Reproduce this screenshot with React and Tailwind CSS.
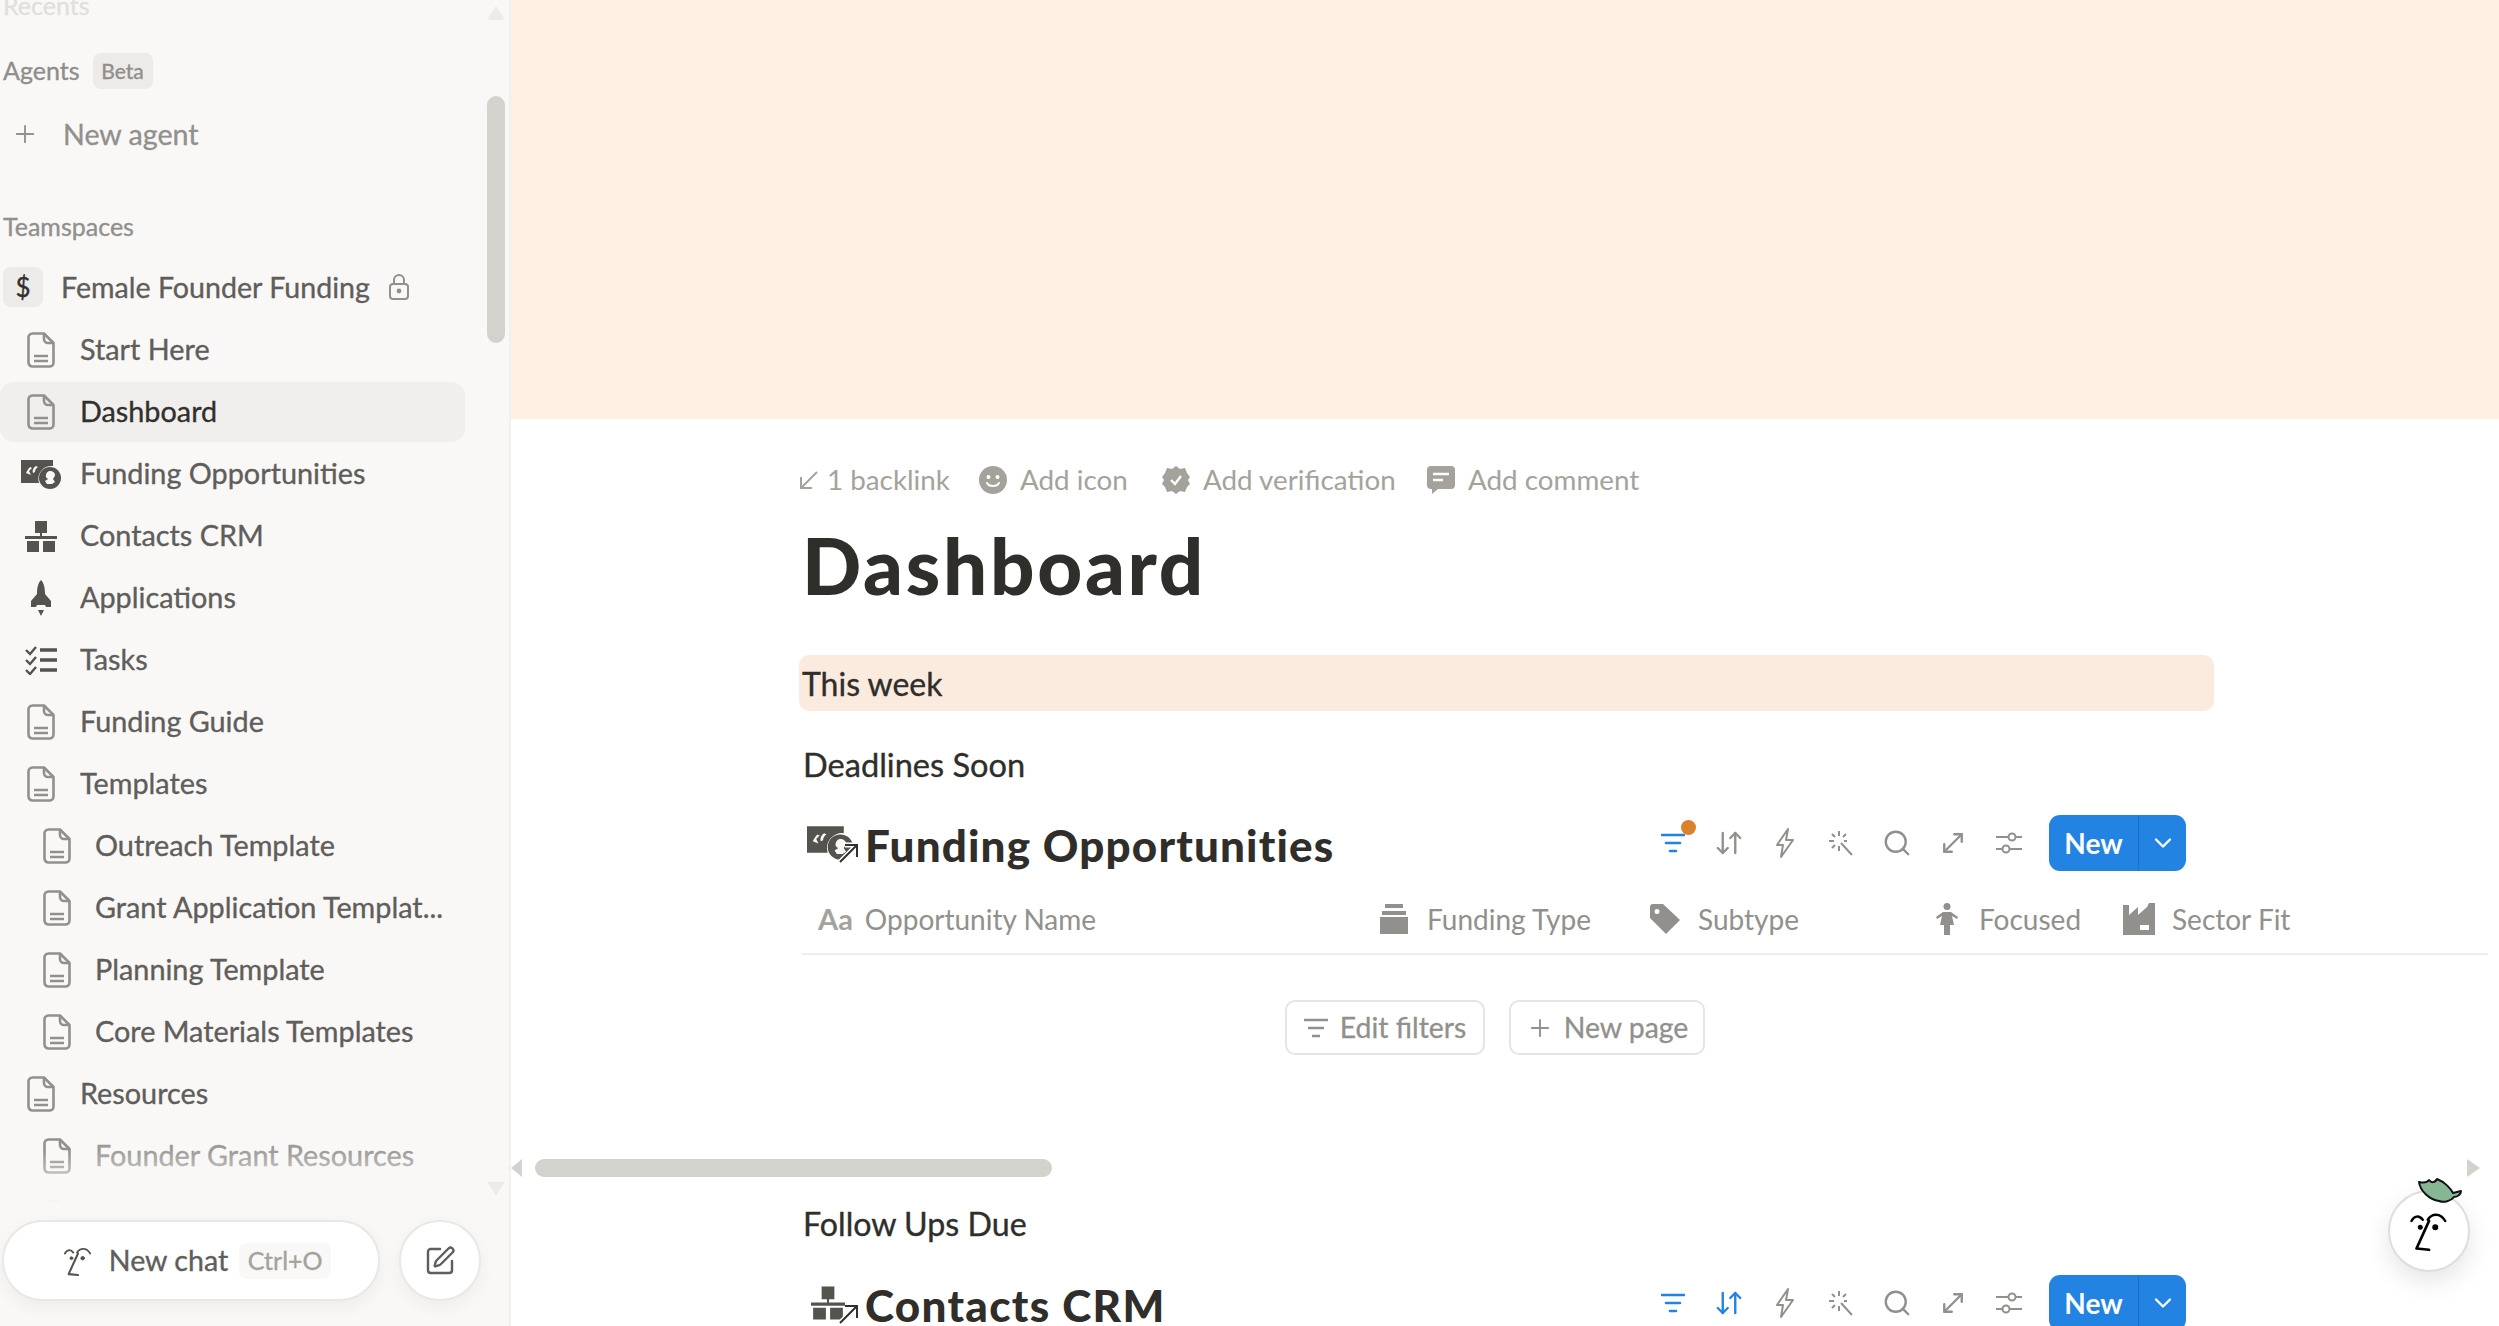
import React from 'react';
import { Plus, ChevronDown, ArrowDownUp, Search, MoveDiagonal, SquarePen } from 'lucide-react';

const DocIcon = () => (
  <svg viewBox="0 0 28 36" className="h-[36px] w-[28px]" fill="none" stroke="#91908c" strokeWidth="2.6" strokeLinejoin="round">
    <path d="M6 1.5h11l9.5 9.5v19.5a4 4 0 0 1-4 4H6a4 4 0 0 1-4.5-4V6A4 4 0 0 1 6 1.5z" />
    <path d="M17 1.5V7a4 4 0 0 0 4 4h5.5" />
    <path d="M7 24h14M7 29h14" />
  </svg>
);

const MoneyIcon = ({ className }) => (
  <svg viewBox="0 0 40 29" className={className} fill="#55534e">
    <path d="M0 0h32v4H0z" />
    <path d="M0 4h32v2a13 13 0 0 0-14 17H0z" />
    <path d="M9 7c-2 2-3 4-4 6l5 2-2-4 3-3z" fill="#f9f8f7" />
    <path d="M15 6c-2 1-4 4-3 7l2-1c0-2 1-4 3-5z" fill="#f9f8f7" />
    <circle cx="29" cy="18" r="11" />
    <path d="M29 11c3 0 5 2 5 4 0 2-2 3-2 4l2 3-3 2h-5l-2-3 3-2c-1-1-3-2-2-4 0-2 2-4 4-4z" fill="#f9f8f7" />
  </svg>
);

const SitemapIcon = ({ className }) => (
  <svg viewBox="0 0 32 31" className={className} fill="#55534e">
    <path d="M10 0h12v12H10zM15 12h2v5h-2z" />
    <path d="M0 15h32v3H0z" />
    <path d="M2 20h12v11H2zM18 20h12v11H18z" />
  </svg>
);

const RocketIcon = ({ className }) => (
  <svg viewBox="0 0 20 36" className={className} fill="#55534e">
    <path d="M10 0c3 3 4 8 4 14l6 7v6h-5l-1-2H6l-1 2H0v-6l6-7C6 8 7 3 10 0z" />
    <path d="M7 30h6l-3 6z" />
  </svg>
);

const TasksIcon = ({ className }) => (
  <svg viewBox="0 0 32 30" className={className} fill="none" stroke="#55534e">
    <path d="M15 5h17M15 15h17M15 25h17" strokeWidth="3.4" />
    <path d="M1 5l4 4 6-7M1 15l4 4 6-7M1 25l4 4 6-7" strokeWidth="2.4" />
  </svg>
);

const LinkArrow = () => (
  <svg viewBox="0 0 22 22" className="absolute bottom-[-3px] right-[-4px] h-[22px] w-[22px]" fill="none" stroke="#ffffff" strokeWidth="5">
    <path d="M3 20L19 4M8 3h12v12" />
    <path d="M3 20L19 4M8 3h12v12" stroke="#32302c" strokeWidth="2" />
  </svg>
);

const Face = ({ className }) => (
  <svg viewBox="0 0 32 34" className={className} fill="none" stroke="currentColor" strokeLinecap="round" strokeLinejoin="round">
    <path d="M2 9c2-4 6-5 9-1" strokeWidth="2" />
    <path d="M15 8c3-5 10-6 14 1" strokeWidth="2" />
    <path d="M16 9L6 31l10 1" strokeWidth="2.2" />
    <circle cx="9" cy="14" r="1.5" fill="currentColor" strokeWidth="1" />
    <circle cx="21" cy="14" r="1.9" fill="currentColor" strokeWidth="1" />
  </svg>
);

const NavRow = ({ icon, label, indent, active, faded }) => (
  <div className={`flex h-[60px] w-[465px] shrink-0 items-center rounded-[14px] ${active ? 'bg-[#f0efed] text-[#32302c]' : faded ? 'text-[#9b9a97]' : 'text-[#5f5e5b]'}`}>
    <div className={`flex shrink-0 justify-center ${indent ? 'w-[95px] pl-[18px]' : 'w-[80px] pl-[2px]'}`}>{icon}</div>
    <span className="truncate text-[28.8px]">{label}</span>
  </div>
);

const navItems = [
  { label: 'Start Here', icon: <DocIcon /> },
  { label: 'Dashboard', icon: <DocIcon />, active: true },
  { label: 'Funding Opportunities', icon: <MoneyIcon className="h-[29px] w-[40px]" /> },
  { label: 'Contacts CRM', icon: <SitemapIcon className="h-[31px] w-[32px]" /> },
  { label: 'Applications', icon: <RocketIcon className="h-[36px] w-[20px]" /> },
  { label: 'Tasks', icon: <TasksIcon className="h-[30px] w-[32px]" /> },
  { label: 'Funding Guide', icon: <DocIcon /> },
  { label: 'Templates', icon: <DocIcon /> },
  { label: 'Outreach Template', icon: <DocIcon />, indent: true },
  { label: 'Grant Application Templat...', icon: <DocIcon />, indent: true },
  { label: 'Planning Template', icon: <DocIcon />, indent: true },
  { label: 'Core Materials Templates', icon: <DocIcon />, indent: true },
  { label: 'Resources', icon: <DocIcon /> },
  { label: 'Founder Grant Resources', icon: <DocIcon />, indent: true, faded: true },
  { label: '', icon: <DocIcon />, indent: true, faded: true },
];

const Sidebar = () => (
  <aside className="relative h-full w-[511px] shrink-0 overflow-hidden border-r-[2px] border-[#f1f0ee] bg-[#f9f8f7] [-webkit-text-stroke:0.35px_currentColor]">
    <div className="-mt-[14px] flex flex-col">
      <div className="flex h-[40px] items-center pl-[3px] text-[25px] text-[#e0dfdc]">Recents</div>
      <div className="mt-[20px] flex h-[50px] items-center pl-[3px] text-[25px] text-[#8f8e8a]">
        Agents
        <span className="ml-[13px] flex h-[36px] w-[60px] items-center justify-center rounded-[8px] bg-[#ecebe9] text-[21px] text-[#8f8e8a]">Beta</span>
      </div>
      <div className="mt-[8px] flex h-[60px] items-center text-[28.6px] text-[#91908c]">
        <Plus className="ml-[11px] h-[28px] w-[28px]" strokeWidth={1.6} />
        <span className="ml-[24px]">New agent</span>
      </div>
      <div className="mt-[43px] flex h-[40px] items-center pl-[3px] text-[25px] text-[#91908c]">Teamspaces</div>
      <div className="mt-[10px] flex h-[60px] items-center pl-[3px] text-[#5f5e5b]">
        <span className="flex h-[40px] w-[40px] items-center justify-center rounded-[8px] bg-[#ecebe9] text-[26px] text-[#32302c]">$</span>
        <span className="ml-[18px] text-[28.6px]">Female Founder Funding</span>
        <svg viewBox="0 0 20 28" className="ml-[19px] h-[28px] w-[20px]" fill="none" stroke="#91908c" strokeWidth="2">
          <path d="M5 11V7a5 5 0 0 1 10 0v4" />
          <rect x="1" y="11" width="18" height="15" rx="3" />
          <circle cx="10" cy="18" r="1.4" fill="#91908c" />
        </svg>
      </div>
      <div className="mt-[3px] flex flex-col gap-[2px]">
        {navItems.map((item, index) => (
          <NavRow key={index} {...item} />
        ))}
      </div>
    </div>

    {/* fade above the chat buttons */}
    <div className="absolute inset-x-0 bottom-0 h-[176px] bg-gradient-to-b from-transparent via-[#f9f8f7] via-30% to-[#f9f8f7]"></div>

    {/* scrollbar */}
    <div className="absolute right-[4px] top-[6px] h-0 w-0 border-x-[9px] border-b-[14px] border-x-transparent border-b-[#ecebe8]"></div>
    <div className="absolute right-[4px] top-[96px] h-[247px] w-[18px] rounded-[9px] bg-[#d3d2cd]"></div>
    <div className="absolute right-[4px] top-[1182px] h-0 w-0 border-x-[9px] border-t-[14px] border-x-transparent border-t-[#ecebe8]"></div>

    <div className="absolute bottom-[25px] left-[2px] flex items-center gap-[19px]">
      <div className="flex h-[81px] w-[378px] items-center justify-center rounded-full border-[2px] border-[#e9e8e5] bg-white pl-[12px] text-[#5f5e5b] shadow-[0_6px_18px_rgba(0,0,0,0.05)]">
        <Face className="h-[32px] w-[30px] text-[#55534e]" />
        <span className="ml-[16px] text-[28.6px]">New chat</span>
        <span className="ml-[11px] flex h-[36px] w-[92px] items-center justify-center rounded-[8px] bg-[#f9f8f7] text-[25px] text-[#a5a29c]">Ctrl+O</span>
      </div>
      <div className="flex h-[81px] w-[82px] items-center justify-center rounded-full border-[2px] border-[#e9e8e5] bg-white shadow-[0_6px_18px_rgba(0,0,0,0.05)]">
        <SquarePen className="h-[32px] w-[32px] text-[#5f5e5b]" strokeWidth={1.8} />
      </div>
    </div>
  </aside>
);

const SmileIcon = () => (
  <svg viewBox="0 0 28 28" className="h-[28px] w-[28px]">
    <circle cx="14" cy="14" r="14" fill="#a5a29c" />
    <circle cx="9.5" cy="11" r="2" fill="#fff" />
    <circle cx="18.5" cy="11" r="2" fill="#fff" />
    <path d="M8 17c2 4 10 4 12 0" fill="none" stroke="#fff" strokeWidth="2" strokeLinecap="round" />
  </svg>
);

const BadgeIcon = () => (
  <svg viewBox="0 0 28 28" className="h-[28px] w-[28px]">
    <path d="M14 0l4 3 5-1 2 5 3 4-2 3 2 4-3 3-2 5-5-1-4 3-4-3-5 1-2-5-3-3 2-4-2-3 3-4 2-5 5 1z" fill="#a5a29c" />
    <path d="M9 14l4 4 6-8" fill="none" stroke="#fff" strokeWidth="2.4" />
  </svg>
);

const CommentIcon = () => (
  <svg viewBox="0 0 28 28" className="h-[28px] w-[28px]">
    <path d="M4 0h20a4 4 0 0 1 4 4v15a4 4 0 0 1-4 4H11l-6 5v-5H4a4 4 0 0 1-4-4V4a4 4 0 0 1 4-4z" fill="#a5a29c" />
    <path d="M6 8h16M6 14h10" stroke="#fff" strokeWidth="2.4" />
  </svg>
);

const MetaItem = ({ icon, label, className }) => (
  <div className={`flex items-center gap-[13px] ${className}`}>
    {icon}
    <span>{label}</span>
  </div>
);

const FilterIcon = ({ color }) => (
  <svg viewBox="0 0 24 20" className="h-[20px] w-[24px]" fill="none" stroke={color} strokeWidth="2.6" strokeLinecap="round">
    <path d="M1 2h22M5 10h14M9 18h6" />
  </svg>
);

const BoltIcon = () => (
  <svg viewBox="0 0 20 30" className="h-[30px] w-[20px]" fill="none" stroke="#91908c" strokeWidth="2" strokeLinejoin="round">
    <path d="M13 1L2 17h6l-2 12 12-17h-7z" />
  </svg>
);

const WandIcon = () => (
  <svg viewBox="0 0 26 26" className="h-[26px] w-[26px]" fill="none" stroke="#91908c" strokeWidth="2">
    <path d="M11 1v5M11 16v5M1 11h5M16 11h3M4 4l3 3M18 4l-3 3M4 18l3-3M13 13l11 12" />
  </svg>
);

const SlidersIcon = () => (
  <svg viewBox="0 0 26 22" className="h-[22px] w-[26px]" fill="none" stroke="#91908c" strokeWidth="2">
    <path d="M0 5h12M20 5h6M0 17h6M14 17h12" />
    <circle cx="16" cy="5" r="3.5" />
    <circle cx="10" cy="17" r="3.5" />
  </svg>
);

const Toolbar = ({ sorted, dot }) => (
  <div className="flex items-center">
    <div className="flex">
      <div className="relative flex h-[40px] w-[56px] items-center justify-center">
        <FilterIcon color="#2383e2" />
        {dot && <span className="absolute right-[5px] top-[-3px] h-[15px] w-[15px] rounded-full bg-[#d9822b]"></span>}
      </div>
      <div className="flex h-[40px] w-[56px] items-center justify-center">
        <ArrowDownUp className={`h-[30px] w-[30px] ${sorted ? 'text-[#2383e2]' : 'text-[#91908c]'}`} strokeWidth={1.9} />
      </div>
      <div className="flex h-[40px] w-[56px] items-center justify-center"><BoltIcon /></div>
      <div className="flex h-[40px] w-[56px] items-center justify-center"><WandIcon /></div>
      <div className="flex h-[40px] w-[56px] items-center justify-center">
        <Search className="h-[30px] w-[30px] text-[#91908c]" strokeWidth={1.9} />
      </div>
      <div className="flex h-[40px] w-[56px] items-center justify-center">
        <MoveDiagonal className="h-[30px] w-[30px] text-[#91908c]" strokeWidth={1.9} />
      </div>
      <div className="flex h-[40px] w-[56px] items-center justify-center"><SlidersIcon /></div>
    </div>
    <div className="ml-[12px] flex h-[56px] w-[137px] overflow-hidden rounded-[11px] bg-[#2383e2] text-white">
      <span className="flex w-[90px] items-center justify-center border-r border-[#1c6fc4] text-[28px] font-bold">New</span>
      <span className="flex flex-1 items-center justify-center">
        <ChevronDown className="h-[28px] w-[28px]" strokeWidth={2} />
      </span>
    </div>
  </div>
);

const TagIcon = () => (
  <svg viewBox="0 0 30 30" className="h-[30px] w-[30px]">
    <path d="M0 3a3 3 0 0 1 3-3h10l17 16-14 14L0 14zM7 5a2.500 2.500 0 1 0 0 5 2.500 2.500 0 0 0 0-5z" fill="#91908c" fillRule="evenodd" />
  </svg>
);

const StackIcon = () => (
  <svg viewBox="0 0 28 30" className="h-[30px] w-[28px]" fill="#91908c">
    <path d="M5 0h18v4H5zM2 7h24v4H2zM0 13h28v17H0z" />
  </svg>
);

const PersonIcon = () => (
  <svg viewBox="0 0 22 32" className="h-[32px] w-[22px]" fill="#91908c">
    <circle cx="11" cy="3.500" r="3.500" />
    <path d="M7 9h8l7 5-1 2-5-3 2 9h-4v10h-6V22H4l2-9-5 3-1-2z" />
  </svg>
);

const FactoryIcon = () => (
  <svg viewBox="0 0 32 32" className="h-[32px] w-[32px]">
    <path d="M0 32V2h6v10l9-8v8l9-8 2-4h6v32zM17 22v5h9v-5z" fill="#91908c" fillRule="evenodd" />
  </svg>
);

const columns = [
  { label: 'Opportunity Name', width: 'w-[565px]', pad: 'pl-[16px]', gap: 'gap-[12px]', icon: <span className="text-[29px] font-bold text-[#a5a29c]">Aa</span> },
  { label: 'Funding Type', width: 'w-[270px]', pad: 'pl-[13px]', gap: 'gap-[19px]', icon: <StackIcon /> },
  { label: 'Subtype', width: 'w-[282px]', pad: 'pl-[13px]', gap: 'gap-[18px]', icon: <TagIcon /> },
  { label: 'Focused', width: 'w-[190px]', pad: 'pl-[17px]', gap: 'gap-[21px]', icon: <PersonIcon /> },
  { label: 'Sector Fit', width: 'w-[376px]', pad: 'pl-[14px]', gap: 'gap-[17px]', icon: <FactoryIcon /> },
];

const Main = () => (
  <main className="relative h-full min-w-0 flex-1 overflow-hidden bg-white">
    <div className="h-[419px] bg-[#fff0e3]"></div>

    <div className="flex flex-col pl-[288px]">
      <div className="mt-[41px] flex h-[40px] items-center text-[27.8px] text-[#a5a29c]">
        <MetaItem
          className="w-[180px] !gap-[8px]"
          label="1 backlink"
          icon={
            <svg viewBox="0 0 20 20" className="h-[20px] w-[20px]" fill="none" stroke="#a5a29c" strokeWidth="2">
              <path d="M18 2L3 17M2 7v11h11" />
            </svg>
          }
        />
        <MetaItem className="w-[183px]" label="Add icon" icon={<SmileIcon />} />
        <MetaItem className="w-[265px]" label="Add verification" icon={<BadgeIcon />} />
        <MetaItem label="Add comment" icon={<CommentIcon />} />
      </div>

      <h1 className="mt-[17px] flex h-[96px] items-center pl-[3px] text-[78px] font-black tracking-[2.7px] text-[#2f2e2b]">Dashboard</h1>

      <div className="mt-[42px] flex h-[56px] w-[1415px] items-center rounded-[10px] bg-[#fbebdf] pl-[3px] pt-[2px] text-[32px] text-[#2f2e2b] [-webkit-text-stroke:0.35px_currentColor]">This week</div>

      <div className="mt-[30px] flex h-[48px] items-center pl-[4px] text-[32.6px] text-[#2f2e2b] [-webkit-text-stroke:0.35px_currentColor]">Deadlines Soon</div>

      <div className="mt-[22px] flex h-[64px] w-[1387px] items-center justify-between pl-[8px]">
        <div className="flex items-center">
          <span className="relative flex h-[36px] w-[48px] items-center">
            <MoneyIcon className="h-[34px] w-[46px]" />
            <LinkArrow />
          </span>
          <span className="ml-[10px] pt-[4px] text-[44px] font-black tracking-[1.15px] text-[#2f2e2b]">Funding Opportunities</span>
        </div>
        <Toolbar dot />
      </div>

      <div className="ml-[3px] mt-[18px] flex h-[62px] w-[1686px] items-center border-b-[2px] border-[#eeeeec] pb-[8px] text-[28px] text-[#91908c]">
        {columns.map(col => (
          <div key={col.label} className={`flex shrink-0 items-center ${col.width} ${col.pad} ${col.gap}`}>
            {col.icon}
            <span>{col.label}</span>
          </div>
        ))}
      </div>

      <div className="mt-[45px] flex h-[55px] w-[1686px] gap-[24px] pl-[486px] text-[28.4px] text-[#91908c] [-webkit-text-stroke:0.3px_currentColor]">
        <div className="flex w-[200px] items-center justify-center gap-[12px] rounded-[10px] border-[2px] border-[#e6e5e2]">
          <svg viewBox="0 0 24 20" className="h-[20px] w-[24px]" fill="none" stroke="#91908c" strokeWidth="2.4">
            <path d="M0 2h24M4 10h16M8 18h8" />
          </svg>
          Edit filters
        </div>
        <div className="flex w-[196px] items-center justify-center gap-[10px] rounded-[10px] border-[2px] border-[#e6e5e2]">
          <Plus className="h-[28px] w-[28px]" strokeWidth={1.6} />
          New page
        </div>
      </div>

      {/* horizontal scrollbar of the table */}
      <div className="-ml-[288px] mt-[104px] flex h-[18px] items-center pr-[19px]">
        <div className="h-0 w-0 border-y-[9px] border-r-[11px] border-y-transparent border-r-[#d3d2cd]"></div>
        <div className="ml-[13px] h-[18px] w-[517px] rounded-[9px] bg-[#d3d2cd]"></div>
        <div className="ml-auto h-0 w-0 border-y-[9px] border-l-[13px] border-y-transparent border-l-[#d3d2cd]"></div>
      </div>

      <div className="mt-[23px] flex h-[48px] items-center pl-[4px] text-[32.2px] text-[#2f2e2b] [-webkit-text-stroke:0.35px_currentColor]">Follow Ups Due</div>

      <div className="mt-[23px] flex h-[64px] w-[1387px] items-center justify-between pl-[8px]">
        <div className="flex items-center">
          <span className="relative flex h-[38px] w-[48px] items-center pl-[4px]">
            <SitemapIcon className="h-[36px] w-[34px]" />
            <LinkArrow />
          </span>
          <span className="ml-[10px] pt-[4px] text-[44px] font-black tracking-[1.3px] text-[#2f2e2b]">Contacts CRM</span>
        </div>
        <Toolbar sorted />
      </div>
    </div>

    {/* floating assistant */}
    <div className="absolute left-[1877px] top-[1190px] flex h-[82px] w-[82px] items-center justify-center rounded-full border-[2px] border-[#dfdeda] bg-white shadow-[0_10px_24px_rgba(0,0,0,0.1)]">
      <Face className="h-[46px] w-[40px] text-black" />
    </div>
    <svg viewBox="0 0 46 28" className="absolute left-[1906px] top-[1177px] h-[28px] w-[46px]">
      <path d="M2 5c4 1 8 1 10-2 2 3 6 3 8-1 8 3 14 10 16 14l8-2c0 3-3 6-7 6-3 4-10 6-15 4C13 23 3 14 2 5z" fill="#86b694" stroke="#111" strokeWidth="2" strokeLinejoin="round" />
    </svg>
  </main>
);

export default function App() {
  return (
    <div className="flex h-screen w-full overflow-hidden bg-white font-['Lato','Liberation_Sans',sans-serif]">
      <Sidebar />
      <Main />
    </div>
  );
}
